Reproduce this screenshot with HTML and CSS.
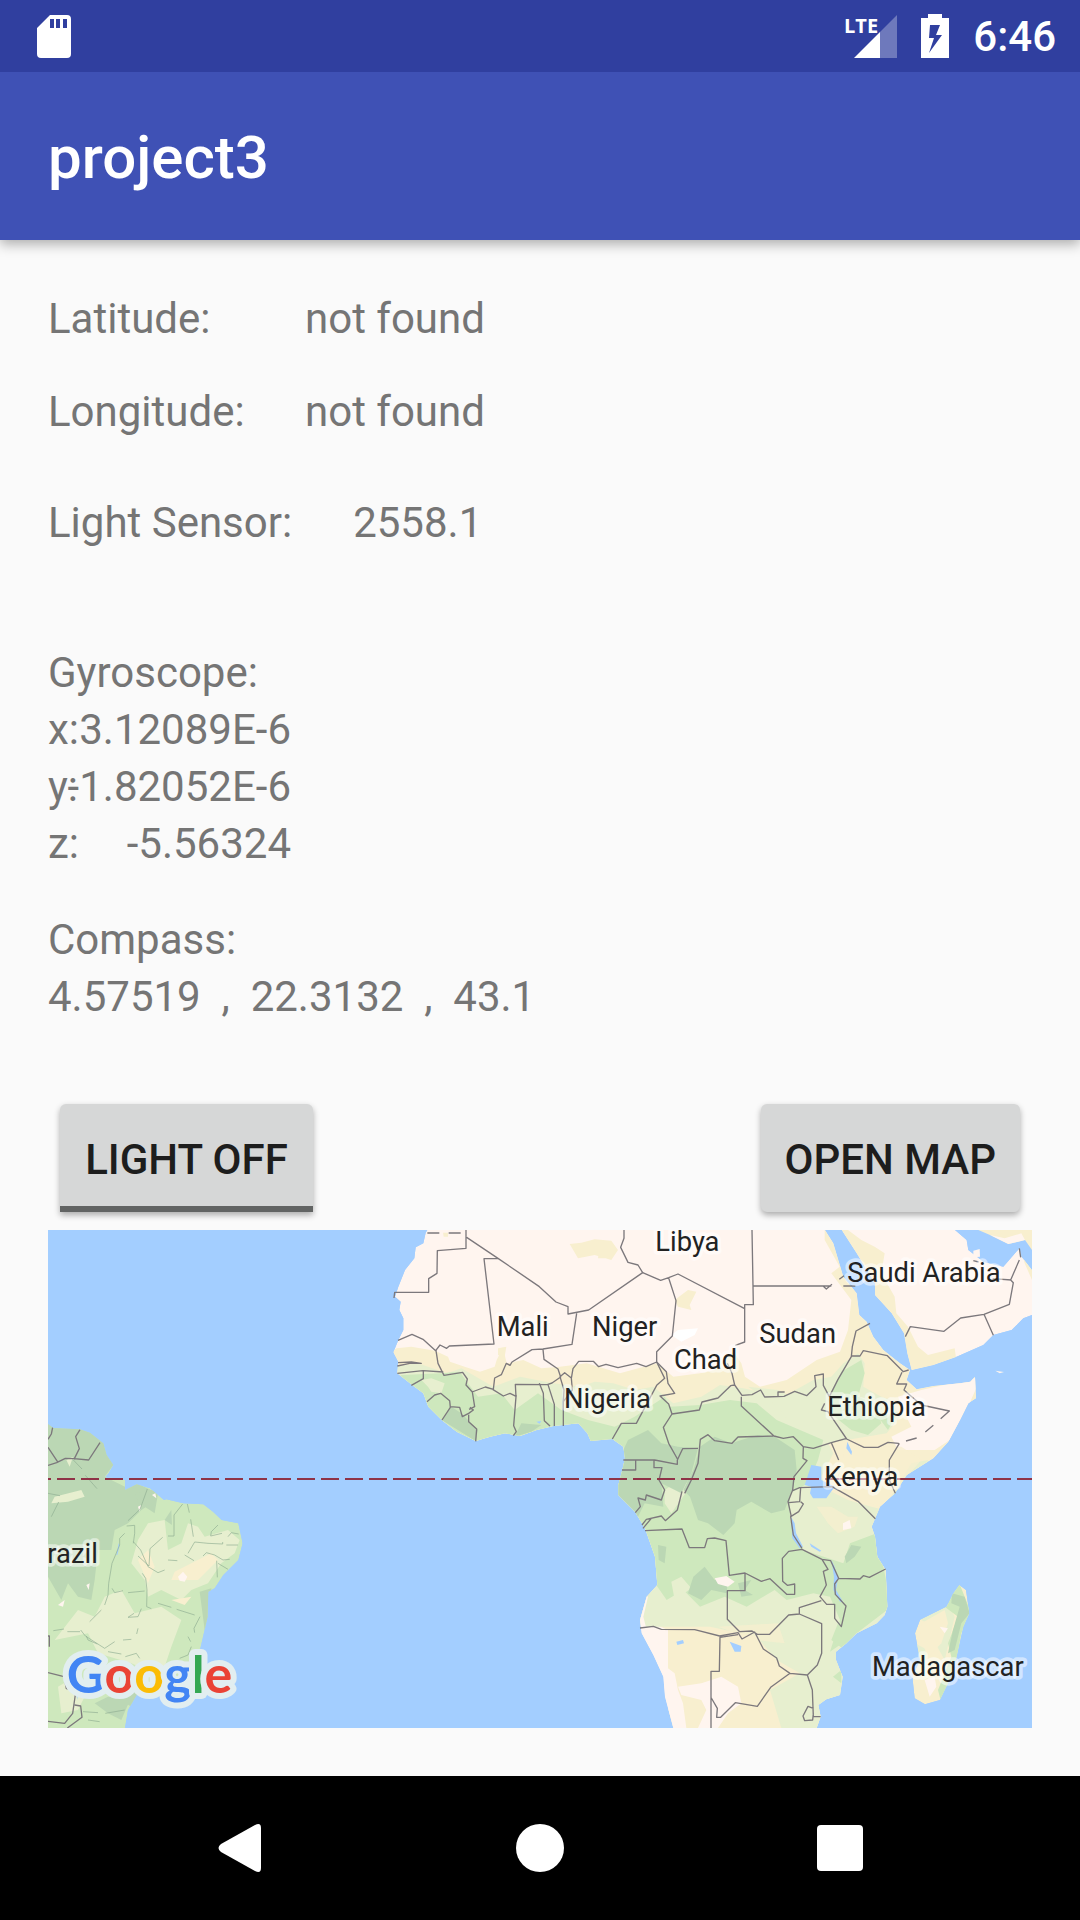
FILE: index.html
```html
<!DOCTYPE html>
<html lang="en">
<head>
<meta charset="utf-8">
<meta name="viewport" content="width=device-width, initial-scale=1">
<title>project3</title>
<link rel="stylesheet" href="styles.css">
</head>
<body>
<div class="status-bar">
  <svg class="status-icon" width="34" height="43" viewBox="0 0 34 43" role="img" aria-label="SD card">
    <path fill="#fff" fill-rule="evenodd" d="M13 0H30Q34 0 34 4V39Q34 43 30 43H4Q0 43 0 39V13ZM13 4V13H17V4ZM19 4V13H23V4ZM26 4V13H30V4Z"/>
  </svg>
  <div class="status-right">
    <svg class="status-icon" width="53" height="43" viewBox="0 0 53 43">
      <path fill="#fff" fill-opacity=".3" d="M53 0V43H36V17Z"/>
      <path fill="#fff" d="M10 43L36 17V43Z"/>
      <text class="network" x="0" y="18">LTE</text>
    </svg>
    <svg class="status-icon" width="28" height="44" viewBox="0 0 28 44" role="img" aria-label="Battery charging">
      <path fill="#fff" fill-rule="evenodd" d="M7 0H21V4H28V44H0V4H7ZM9 11L8 24H13L8 39L21 21H15L19 11Z"/>
    </svg>
    <time class="clock">6:46</time>
  </div>
</div>
<header class="app-bar"><h1 class="title">project3</h1></header>
<main class="content">
  <dl class="location">
    <dt>Latitude:</dt><dd>not found</dd>
    <dt>Longitude:</dt><dd>not found</dd>
  </dl>
  <dl class="light"><dt>Light Sensor:</dt><dd>2558.1</dd></dl>
  <section class="gyroscope">
    <h2 class="label">Gyroscope:</h2>
    <dl class="axes">
      <div class="axis"><dt>x:</dt><dd>3.12089E-6</dd></div>
      <div class="axis"><dt>y:</dt><dd>-1.82052E-6</dd></div>
      <div class="axis"><dt>z:</dt><dd>-5.56324</dd></div>
    </dl>
  </section>
  <section class="compass">
    <h2 class="label">Compass:</h2>
    <p class="bearing">4.57519  ,  22.3132  ,  43.1</p>
  </section>
  <div class="actions">
    <button class="button toggle" type="button" aria-pressed="false">Light off</button>
    <button class="button" type="button">Open map</button>
  </div>
  <svg class="map" viewBox="0 0 2952 1494" role="img" aria-label="Map of Africa and the Atlantic">
    <defs>
      <path id="africa" d="M1138 0L1133 8 1126 40 1103 52 1099 85 1071 120 1051 170 1041 200 1058 215 1054 240 1066 265V300L1051 330 1036 367 1051 395 1048 430 1086 460 1126 490 1141 530 1181 570 1226 605 1283 633 1326 620 1371 610 1416 618 1466 600 1516 588 1591 580 1618 610 1628 633 1693 627 1726 650 1731 685 1723 720 1711 765V795L1761 845 1791 895 1821 980 1828 1065 1796 1100 1776 1170 1781 1210 1816 1275 1846 1340 1851 1400 1876 1494H2306L2318 1460 2311 1425 2335 1408 2376 1395 2384 1340 2364 1290V1265L2395 1240 2426 1210 2486 1180 2510 1155 2518 1130 2513 1020 2488 980 2481 920 2471 890 2496 830 2541 790 2576 735 2656 685 2701 635 2736 570 2761 520 2784 505 2781 440 2767 455 2736 460 2656 468 2606 478 2576 450 2586 420 2556 400 2506 360 2476 320 2456 275 2434 255 2426 190 2386 140 2356 40 2331 0Z"/>
      <path id="arabia" d="M2381 0L2426 70 2481 160V195L2531 250 2568 310 2578 370 2591 420 2656 405 2726 380 2806 345 2836 315 2891 300 2926 265 2952 255V120L2921 80 2914 55 2866 110 2806 95 2761 60 2756 30 2721 0Z"/>
      <path id="brazil" d="M0 582L16 594 96 598 126 608 166 640 176 675 196 705 176 740 231 750V780L266 763 306 775 348 810 355 808 406 820 466 823 495 845 521 870 571 880 584 940 571 990 526 1035 500 1075 481 1085 479 1160 456 1260 436 1310 370 1350 306 1370 266 1395 240 1440 231 1494H0Z"/>
      <path id="madagascar" d="M2734 1065L2754 1080 2764 1150 2746 1190 2726 1280 2700 1360 2676 1410 2631 1423 2600 1405 2593 1340 2616 1290 2601 1210 2616 1170 2696 1130 2716 1090Z"/>
      <clipPath id="africa-clip"><use href="#africa"/></clipPath>
      <clipPath id="arabia-clip"><use href="#arabia"/></clipPath>
      <clipPath id="brazil-clip"><use href="#brazil"/></clipPath>
      <clipPath id="madagascar-clip"><use href="#madagascar"/></clipPath>
    </defs>
    <rect class="water" width="2952" height="1494"/>

    <g clip-path="url(#africa-clip)">
      <use class="desert" href="#africa"/>
      <path class="dry" d="M1030 365L1046 355 1090 350 1161 362 1200 380 1206 395 1250 410 1296 425 1340 410 1346 390 1365 352 1376 400 1426 390 1480 415 1536 410 1616 400 1716 430 1826 400 1876 440 1956 430 2000 420 2056 365 2080 400 2091 440 2136 470 2216 450 2306 390 2376 365 2400 300 2410 210 2350 130 2375 110 2330 30V0H2952V1494H1860V1200L1700 1130 1000 700Z"/>
      <path class="dry" d="M1565 42L1600 38 1640 28 1690 32 1710 60 1690 90 1640 75 1590 85ZM1880 210L1920 180 1945 185 1925 225 1930 240 1890 230ZM1350 355L1375 350 1370 380 1350 375ZM1185 8H1200V20H1187ZM1655 35L1688 33 1680 85H1650Z"/>
      <path fill="#fff" d="M1870 315L1890 300 1950 295 1940 315 1900 335Z"/>
      <path class="desert" d="M2550 500L2620 480 2800 440 2720 620 2660 660 2550 660 2530 620 2590 590 2570 550Z"/>
      <path class="grass" d="M1030 410L1110 400 1196 430 1240 415 1336 470 1416 440 1516 460 1596 470 1640 455 1696 460 1760 480 1816 470 1876 520 1960 500 2016 465 2086 475 2206 500 2296 450 2350 440 2386 400 2430 370 2450 400 2446 470 2500 500 2530 510 2556 560 2516 610 2396 630 2340 640 2356 670 2320 740 2340 780 2400 810 2470 830 2510 840 2540 780 2590 700 2640 690 2600 1240 2420 1340 2306 1494H2200L2166 1380 2256 1330 2186 1290 2126 1220 1986 1190 1776 1190 1680 600 1200 650 1000 450Z"/>
      <path class="forest" d="M1060 435L1180 430 1235 425 1260 460 1290 500 1360 490 1400 540 1470 490 1540 540 1620 570 1700 590 1760 560 1850 500 1866 530 1956 525 2046 510 2126 520 2186 570 2326 630 2310 690 2280 760 2226 790 2226 870 2266 960 2386 1000 2406 940 2486 910 2530 1130 2426 1210 2346 1265 2376 1170 2346 1100 2296 1090 2216 1110 2180 1080 2096 1130 2030 1100 1956 1130 1906 1080 1856 1110 1821 1060 1680 800V640L1283 660 1036 450Z"/>
      <path class="forest" d="M2380 425L2440 390 2450 430 2430 500 2480 520 2500 580 2460 615 2410 600 2360 560 2340 510ZM2490 560L2550 545 2520 600ZM2370 1180L2350 1230 2390 1260 2430 1200ZM2355 1340L2380 1320V1360Z"/>
      <path class="grass" d="M1120 450L1150 445 1190 460 1180 490 1150 485 1140 470ZM2100 470L2190 480 2250 510 2220 570 2190 530ZM1540 470L1620 490 1640 540 1560 520ZM1870 1055L1900 1040 1930 1075 1880 1110ZM1850 780L1895 750 1930 765 1870 850 1850 820Z"/>
      <path class="jungle" d="M1956 650L2000 620 2050 640 2080 630 2130 615 2180 620 2240 660 2246 720 2236 770 2210 840 2170 850 2110 815 2066 840 2060 880 2026 915 1980 880 1950 870 1926 800 1906 780 1936 720ZM1726 660L1740 630 1800 600 1840 640 1890 650 1950 655 1930 730 1900 790 1840 760 1846 830 1790 820 1770 860 1690 790V690H1720ZM1181 570L1210 530 1240 550 1260 570 1290 600 1283 633ZM1400 620L1420 580 1480 585 1450 605ZM1936 1040L1970 1010 2000 1050 2040 1040 2036 1090 1990 1080 1960 1110 1920 1090ZM1830 945L1855 950 1850 1000 1832 990ZM2390 980L2410 945 2440 950 2420 980 2395 1000ZM2070 1060L2110 1050 2090 1080 2115 1095 2080 1100Z"/>
      <path class="dry" d="M2306 830L2350 830 2400 860 2430 860 2420 890 2370 910 2340 880ZM2460 650L2560 650 2620 690 2500 830 2400 800 2380 720 2390 660ZM2010 1190L2190 1180 2210 1240 2120 1230Z" opacity=".7"/>
      <path class="desert" d="M1770 1080L1800 1100 1786 1160 1800 1215 1850 1260 1840 1300 1880 1330 1890 1380 1905 1420 1915 1494H1860L1760 1220ZM1890 1370L1960 1360 2020 1340 2070 1370 2080 1420 2040 1450 2010 1494H1950L1975 1440 1960 1410 1900 1395ZM2000 1045L2035 1038 2060 1055 2040 1070 2010 1062ZM2385 880L2405 870 2410 895 2385 900Z"/>
      <path class="water" d="M2290 705L2320 710 2320 750 2360 770 2335 805H2295L2286 790 2290 770 2270 765ZM2229 860L2240 880 2244 910 2265 950 2255 955 2233 925ZM2350 990L2360 1010 2370 1045 2364 1080 2385 1115 2376 1115 2356 1080 2358 1040ZM2398 635L2412 665 2410 675 2395 655ZM2285 940L2320 962 2315 965 2290 950ZM2045 1235L2080 1248 2078 1265 2060 1265ZM1885 1235L1905 1230 1908 1240 1888 1245ZM1465 575L1480 573 1475 581Z"/>
    </g>
    <path class="desert" d="M2842 422L2868 426 2855 430Z"/>

    <g clip-path="url(#arabia-clip)">
      <use class="desert" href="#arabia"/>
      <path class="dry" d="M2381 0H2400L2440 30 2480 50 2510 70 2500 130 2540 200 2545 250 2580 290 2610 350 2640 375 2720 355 2725 390 2590 430 2560 310 2480 220 2420 90ZM2925 80L2952 110V150L2930 100Z"/>
    </g>
    <path class="dry" d="M2791 0L2826 15 2881 42 2931 30 2952 60V0Z"/>
    <path class="desert" d="M2826 15L2881 42 2931 30 2920 10 2870 25ZM2776 62L2795 57 2796 80 2776 82Z"/>

    <g clip-path="url(#brazil-clip)">
      <use class="forest" href="#brazil"/>
      <path class="jungle" d="M0 580H110L176 640 200 700 170 740 231 770 266 760 330 790 320 850 290 830 240 880 200 900 190 960 150 960 140 1050 130 1110 90 1100 60 1060 40 1110 0 1040Z"/>
      <path class="jungle" d="M455 1085L490 1075V1170L470 1200ZM260 790L320 780 325 810 280 840ZM350 870L370 840 372 885ZM140 1420L180 1400 250 1400 220 1470 180 1450ZM170 1380L290 1370 250 1430Z"/>
      <path class="grass" d="M300 880L350 870 360 960 400 940 420 880 450 890 470 920 540 900 575 930 560 970 520 1000 480 1060 430 1080 400 1110 340 1080 300 1100 290 1050 250 1000 270 930ZM20 1230L90 1140 140 1160 170 1100 220 1080 260 1150 340 1130 400 1170 370 1250 340 1340 250 1300 150 1270 120 1210ZM30 1370L80 1340 120 1380 90 1440 40 1450ZM20 800L100 780 110 800 60 815 10 820ZM55 690L75 680 65 710Z"/>
      <path class="dry" d="M270 990L300 960 320 1010 300 1060ZM430 1000L490 970 510 990 450 1050 370 1050 380 1025ZM370 1110L430 1100 410 1125Z"/>
      <path class="desert" d="M390 1040L405 1025 418 1040 410 1055 395 1052ZM312 795L322 790 325 805ZM270 830L280 825 275 845ZM115 1065L125 1060 122 1080ZM30 1125L50 1110 45 1130Z"/>
      <path class="water" d="M172 740L190 720 196 730 185 750ZM205 975L212 940 215 945 208 975ZM84 1390L90 1380 88 1410Z"/>
      <path class="state" d="M76 690L102 717M112 736L147 776M0 790L36 797M32 816L10 860M298 777L276 838 240 872M236 888L260 886V910L256 940M230 910L215 925V945L192 1000 182 1060 180 1095 170 1125M418 822L424 848M428 868L436 920M404 822L378 855V918H360M344 922L306 956 303 1008 270 978M256 935L278 960 300 1010 330 1028 350 1020M510 885L490 905 488 918 522 910M540 920L550 908 572 912M570 945H535M524 936V942L480 940 440 936 420 970M410 975L438 992M465 978L475 968 500 975 525 990 545 988M360 990L388 992M506 992L508 1042M510 1000L540 1018M283 1030L293 1045 297 1080 296 1130 310 1136M240 1088L290 1083M192 1075L200 1088 225 1082M330 1120L370 1132M386 1138L440 1155M456 1160L438 1195 440 1208M280 1136L270 1160 240 1162 258 1150M270 1195L266 1212M16 1202L48 1197M58 1205H96M98 1200L112 1218 170 1255 200 1235M115 1218L120 1230 148 1242M125 1175L160 1140M180 1265L220 1272M225 1230L250 1228M232 1280L265 1270 275 1285M428 1235L420 1220M430 1250L420 1275 395 1285M105 1445L150 1448M172 1450L230 1440M120 1470L155 1475"/>
      <path class="border" d="M14 592L10 612 0 628M0 652L30 697M0 706L26 698 52 685 78 686 122 690 156 638M96 599L83 620 94 656 78 688M0 1218H4V1250M0 1328L48 1340 55 1376 84 1380 74 1450 50 1480 0 1474M80 1425L98 1428 102 1462 58 1494"/>
    </g>

    <g clip-path="url(#madagascar-clip)">
      <use class="dry" href="#madagascar"/>
      <path class="grass" d="M2690 1100L2720 1160 2690 1290 2640 1200 2660 1190 2600 1160ZM2600 1240L2640 1260 2620 1320Z"/>
      <path class="dry" d="M2620 1180L2690 1140 2700 1180 2680 1240 2640 1280 2615 1220Z"/>
      <path class="forest" d="M2710 1090L2734 1060 2770 1150 2740 1210 2726 1290 2680 1420 2670 1380 2710 1280 2700 1240 2730 1160 2690 1130Z"/>
      <path class="jungle" d="M2712 1090L2750 1100 2765 1150 2740 1180 2720 1260 2700 1270 2715 1200 2735 1130 2710 1120Z"/>
      <path class="desert" d="M2630 1350L2660 1340 2665 1370 2645 1400ZM2675 1190L2700 1195 2690 1210Z"/>
    </g>

    <g class="border">
      <!-- West Africa -->
      <path d="M1138 9H1174M1202 9H1238M1254 0V55L1168 62 1167 130 1142 146V187H1040L1038 204M1256 22L1350 85 1474 170 1524 216 1560 230V252L1622 240 1784 128 1770 105 1740 97 1718 52 1728 25V0M1350 86H1308L1338 342 1204 348 1196 355 1176 345 1163 362 1125 328 1092 313 1050 331M1586 250L1572 343 1485 357 1452 359 1392 396 1386 406 1375 400 1360 434 1340 444 1336 478 1312 471 1272 486M1485 358L1488 388 1530 417 1538 441 1512 459 1498 464 1402 463 1404 500 1397 587 1405 605 1396 617M1164 362L1170 400 1188 436 1244 427 1258 447 1254 465 1273 486 1280 530 1263 538M1048 430L1125 422 1186 426M1126 423V446L1090 466M1048 408L1085 400 1120 400 1090 396 1050 398M1137 515L1160 495 1178 490 1205 512 1207 532 1182 570M1206 530L1235 532 1243 560 1262 550 1276 540 1266 532M1262 554L1262 575 1286 597 1283 634M1334 478L1366 498 1386 490 1406 500M1474 460L1486 490 1489 572 1506 588M1500 464L1519 523V588M1546 588V515L1548 480 1536 440 1550 428 1570 444 1573 480 1546 515M1570 445L1575 416 1592 394 1636 394 1652 410 1674 403 1710 413 1766 400 1794 410 1826 396 1850 445 1826 466 1765 580H1720L1693 627"/>
      <!-- Central and northern Africa -->
      <path d="M1784 128L1838 151 1862 143 1890 132 2090 236M1862 144L1884 212 1873 318 1826 365V396L1855 425 1860 460 1880 490 1836 498 1862 522 1872 552 1846 592 1862 640 1890 690M1872 552L1954 540 1962 516 2010 504 2048 467 2060 465 2052 430 2038 400M2112 0L2116 224H2090V336L2062 346M2116 168H2350M2325 168L2335 177 2352 163M2386 168H2422M2374 148L2388 137M2060 465L2082 496 2112 494 2138 480 2150 501 2208 499 2240 484 2276 497 2304 470 2300 437 2326 432V466L2344 500 2370 448 2410 380 2413 350 2424 303 2466 280M2190 499V486H2210M2412 378H2436L2446 362 2518 377 2566 425 2582 420M2562 427L2546 462H2576L2568 480 2620 525 2704 543 2678 566M2656 586L2632 606M2606 624L2574 633M2552 640L2520 637 2490 652 2448 652 2396 627 2340 545 2320 540 2330 520M2396 625L2350 638 2296 655 2266 650 2236 620 2206 625 2178 618 2080 528V500M2176 618L2070 621 2052 640 2000 632 1980 614 1957 628 1950 700 1930 750 1910 790M1950 655L1904 656 1888 690V703L1820 690H1726M1763 690V720H1722M1818 690V713H1842L1833 750 1850 780 1840 810 1795 795 1792 810 1770 804 1777 830 1762 848M1902 784L1888 840 1852 872 1840 858 1795 868 1782 885M1810 865L1785 895M2266 650L2265 685 2277 692 2238 740 2234 780 2220 815 2230 860M2350 638L2372 690M2554 640L2524 690V750L2542 790M2234 782L2255 773 2352 770 2430 814 2482 866M2222 818L2255 815 2258 773M2258 815L2266 822 2252 845 2228 860 2236 915 2262 955"/>
      <!-- Southern Africa -->
      <path d="M1791 902L1902 897 1924 953H1970L1978 926 2000 924 2034 932 2044 1036 2091 1029 2140 1054 2166 1046 2216 1093H2240V1062L2218 1066 2204 1054 2203 985 2222 964 2262 958 2322 988 2340 1018 2326 1024 2335 1065 2316 1100 2336 1123H2360V1165L2380 1190 2394 1128 2362 1093 2360 1062 2372 1045 2436 1047 2446 1037 2464 1042 2513 1017M2322 988L2348 992 2372 1045M2091 1030V1082H2038V1168L2075 1205 2112 1203 2128 1213 2165 1213 2222 1155 2254 1152V1133L2320 1112M2254 1152L2321 1181V1270L2308 1305 2278 1335 2226 1330 2194 1308 2186 1284 2146 1257 2120 1206 2082 1227 2070 1208 2015 1218 1940 1199 1840 1198 1816 1189 1776 1194M2070 1214L2016 1222 2014 1324H1989V1494M1990 1404L2008 1435 2006 1462H2018L2062 1418 2128 1429 2168 1372 2226 1330M2278 1335L2293 1380 2296 1460H2318M2296 1450L2294 1470 2270 1472 2265 1458 2280 1429 2296 1435"/>
      <!-- Arabia -->
      <path d="M2572 320L2587 290 2688 304 2738 264 2808 253 2884 223 2896 158 2888 150 2914 90M2808 253L2836 316M2834 146L2890 150M2776 92L2792 96M2914 55L2918 82"/>
    </g>

    <path class="equator" d="M-45 747H2952"/>

    <g class="places">
      <text x="1822" y="62">Libya</text>
      <text x="1346" y="319">Mali</text>
      <text x="1632" y="319">Niger</text>
      <text x="1878" y="417">Chad</text>
      <text x="2134" y="340">Sudan</text>
      <text x="2398" y="156">Saudi Arabia</text>
      <text x="1548" y="534">Nigeria</text>
      <text x="2338" y="558">Ethiopia</text>
      <text x="2329" y="768">Kenya</text>
      <text x="2472" y="1338">Madagascar</text>
      <text x="-2" y="999">razil</text>
    </g>
    <text class="google" x="56" y="1388"><tspan fill="#4285f4">G</tspan><tspan fill="#ea4335">o</tspan><tspan fill="#fbbc05">o</tspan><tspan fill="#4285f4">g</tspan><tspan fill="#34a853">l</tspan><tspan fill="#ea4335">e</tspan></text>
  </svg>
</main>
<nav class="nav-bar" aria-label="System">
  <button class="nav-button" type="button" aria-label="Back">
    <svg width="48" height="48" viewBox="0 0 48 48"><path fill="#fff" d="M39 1Q45-2 45 4V44Q45 50 39 47L5 28Q0 24 5 20Z"/></svg>
  </button>
  <button class="nav-button" type="button" aria-label="Home">
    <svg width="48" height="48" viewBox="0 0 48 48"><circle fill="#fff" cx="24" cy="24" r="24"/></svg>
  </button>
  <button class="nav-button" type="button" aria-label="Overview">
    <svg width="48" height="48" viewBox="0 0 48 48"><rect fill="#fff" x="1" y="1" width="46" height="46" rx="4"/></svg>
  </button>
</nav>
</body>
</html>
```
FILE: styles.css
```css
* { box-sizing: border-box; margin: 0; }

body {
  min-height: 100vh;
  display: flex;
  flex-direction: column;
  background: #fafafa;
  color: #757575;
  font-family: Roboto, "Noto Sans", sans-serif;
  font-size: 42px;
  line-height: 57px;
}

/* Status and title bars */
.status-bar {
  position: relative;
  z-index: 1;
  height: 72px;
  padding: 0 24px 0 37px;
  display: flex;
  align-items: center;
  justify-content: space-between;
  background: #303f9f;
  color: #fff;
}
.status-right { display: flex; align-items: center; gap: 24px; }
.status-icon { display: block; overflow: visible; }
.network { fill: #fff; font: bold 20px "Liberation Sans Narrow", "Open Sans", sans-serif; }
.clock { font-weight: 500; }

.app-bar {
  height: 168px;
  padding: 4px 48px 0;
  display: flex;
  align-items: center;
  background: #3f51b5;
  color: #fff;
  box-shadow: 0 4px 12px rgba(0, 0, 0, .32);
}
.title { font-size: 60px; font-weight: 500; line-height: 72px; }

/* Sensor readings */
.content {
  flex: 1;
  display: flex;
  flex-direction: column;
  padding: 50px 48px 48px;
}
dd { margin: 0; }
.location {
  display: grid;
  grid-template-columns: 257px auto;
  row-gap: 36px;
}
.light { display: flex; gap: 61px; margin-top: 54px; }
.gyroscope { margin-top: 93px; }
.compass { margin-top: 39px; }
.label { font-size: 42px; font-weight: 400; line-height: 57px; }
.axes { width: 243px; }
.axis { display: grid; grid-template-columns: 100%; }
.axis dt, .axis dd { grid-area: 1 / 1; }
.axis dd { justify-self: end; }
.bearing { white-space: pre; }

/* Buttons */
.actions {
  display: flex;
  justify-content: space-between;
  margin-top: auto;
  padding: 18px 12px;
}
.button {
  height: 108px;
  min-width: 253px;
  padding: 2px 24px 0;
  border: 0;
  border-radius: 6px;
  background: #d6d7d7;
  color: #1d1d1d;
  font: 500 42px/57px Roboto, "Noto Sans", sans-serif;
  text-transform: uppercase;
  box-shadow: 0 3px 6px rgba(0, 0, 0, .32);
}
.toggle {
  border-radius: 6px 6px 0 0;
  box-shadow: inset 0 -6px #626463, 0 3px 6px rgba(0, 0, 0, .32);
}

/* Map */
.map { display: block; width: 100%; height: auto; }
.water { fill: #a3ceff; }
.desert { fill: #fff5ef; }
.dry { fill: #f8efcf; }
.grass { fill: #e7efcf; }
.forest { fill: #cee8bd; }
.jungle { fill: #bbd7b4; }
.border { fill: none; stroke: #7c787c; stroke-width: 4; stroke-linejoin: round; }
.state { fill: none; stroke: #8fae92; stroke-width: 2; }
.equator { fill: none; stroke: #8f3347; stroke-width: 6; stroke-dasharray: 54 18; }
.places {
  font: 400 82px Roboto, "Noto Sans", sans-serif;
  fill: #222;
  stroke: rgba(255, 255, 255, .5);
  stroke-width: 22;
  stroke-linejoin: round;
  paint-order: stroke;
}
.google {
  font: 700 156px Lato, "Open Sans", sans-serif;
  stroke: #e2eef0;
  stroke-width: 36;
  stroke-linejoin: round;
  paint-order: stroke;
}

/* System navigation */
.nav-bar {
  height: 144px;
  display: flex;
  justify-content: center;
  gap: 204px;
  align-items: center;
  background: #000;
}
.nav-button {
  width: 96px;
  height: 96px;
  padding: 0;
  border: 0;
  background: none;
  display: grid;
  place-items: center;
}
```
